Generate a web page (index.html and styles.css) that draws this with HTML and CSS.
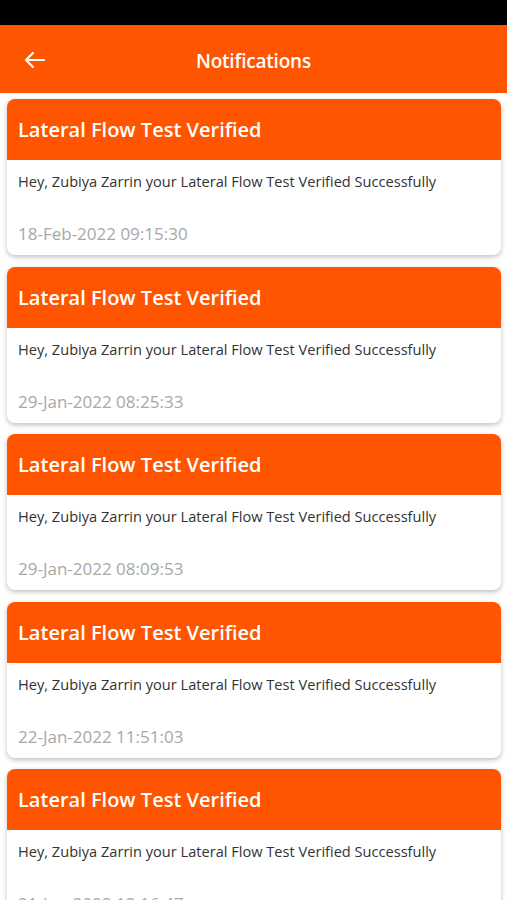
FILE: index.html
```html
<!DOCTYPE html>
<html lang="en">
<head>
    <meta charset="UTF-8">
    <meta name="viewport" content="width=device-width, initial-scale=1.0">
    <title>Notifications</title>
    <link rel="stylesheet" href="styles.css">
</head>
<body>
  <div class="status-bar"></div>
  <header class="app-bar">
    <button class="back">
      <svg width="22" height="18" viewBox="0 0 22 18" fill="none" stroke="#fff" stroke-width="2.2" stroke-linecap="round" stroke-linejoin="round">
        <path d="M20 9H2M9 2L2 9l7 7"/>
      </svg>
    </button>
    <h1>Notifications</h1>
  </header>
  <div class="list">
    <div class="card">
      <div class="card-head">Lateral Flow Test Verified</div>
      <div class="card-body">
        <p class="msg">Hey, Zubiya Zarrin your Lateral Flow Test Verified Successfully</p>
        <p class="date">18-Feb-2022 09:15:30</p>
      </div>
    </div>
    <div class="card">
      <div class="card-head">Lateral Flow Test Verified</div>
      <div class="card-body">
        <p class="msg">Hey, Zubiya Zarrin your Lateral Flow Test Verified Successfully</p>
        <p class="date">29-Jan-2022 08:25:33</p>
      </div>
    </div>
    <div class="card">
      <div class="card-head">Lateral Flow Test Verified</div>
      <div class="card-body">
        <p class="msg">Hey, Zubiya Zarrin your Lateral Flow Test Verified Successfully</p>
        <p class="date">29-Jan-2022 08:09:53</p>
      </div>
    </div>
    <div class="card">
      <div class="card-head">Lateral Flow Test Verified</div>
      <div class="card-body">
        <p class="msg">Hey, Zubiya Zarrin your Lateral Flow Test Verified Successfully</p>
        <p class="date">22-Jan-2022 11:51:03</p>
      </div>
    </div>
    <div class="card">
      <div class="card-head">Lateral Flow Test Verified</div>
      <div class="card-body">
        <p class="msg">Hey, Zubiya Zarrin your Lateral Flow Test Verified Successfully</p>
        <p class="date">21-Jan-2022 12:16:47</p>
      </div>
    </div>
  </div>
</body>
</html>
```
FILE: styles.css
```css
html, body {
  margin: 0;
  height: 100%;
  overflow: hidden;
  font-family: 'Open Sans', 'Noto Sans', sans-serif;
  background-color: #fff;
}
.status-bar {
  height: 25px;
  background-color: #000;
}
.app-bar {
  height: 68px;
  box-sizing: border-box;
  padding-top: 3px;
  background-color: #ff5500;
  display: flex;
  align-items: center;
  justify-content: center;
  position: relative;
}
.app-bar h1 {
  margin: 0;
  color: #fff;
  font-size: 19px;
  font-weight: 600;
  letter-spacing: -0.2px;
}
.back {
  position: absolute;
  left: 24px;
  top: 26px;
  padding: 0;
  border: none;
  background: none;
  display: flex;
}
.list {
  padding: 6px 6px 0 7px;
  display: flex;
  flex-direction: column;
  gap: 11.5px;
}
.card {
  border-radius: 8px;
  overflow: hidden;
  background-color: #fff;
  box-shadow: 0 2px 5px rgba(0,0,0,0.25);
}
.card-head {
  height: 61px;
  background-color: #ff5500;
  color: #fff;
  font-size: 20px;
  font-weight: 600;
  padding-left: 11px;
  display: flex;
  align-items: center;
}
.card-body {
  padding: 11px 11px 9px;
}
.msg {
  margin: 0;
  font-size: 14.6px;
  line-height: 20px;
  color: #333;
}
.date {
  margin: 31px 0 0;
  font-size: 17px;
  line-height: 24px;
  color: #a8a8a8;
}
```
